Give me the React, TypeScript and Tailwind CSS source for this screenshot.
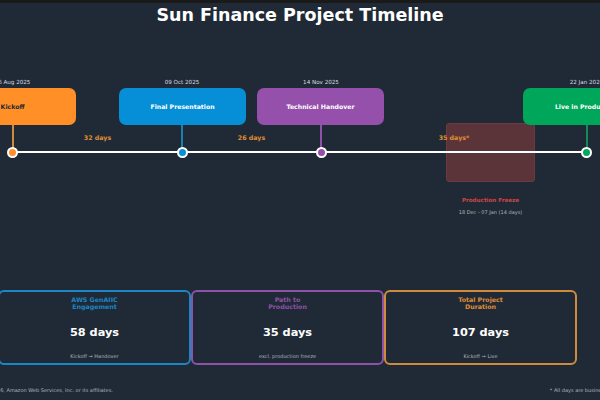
const font = { fontFamily: '"DejaVu Sans", sans-serif' };

const milestones = [
  { date: "06 Aug 2025", label: "Kickoff", x: 12.5, left: -51, box: "bg-[#ff8f26]", stem: "bg-[#d08a3c]", dot: "bg-[#ff8f26]", text: "text-[#1f2933]" },
  { date: "09 Oct 2025", label: "Final Presentation", x: 182, left: 119, box: "bg-[#068fd6]", stem: "bg-[#1a7fb5]", dot: "bg-[#068fd6]", text: "text-white" },
  { date: "14 Nov 2025", label: "Technical Handover", x: 321, left: 257, box: "bg-[#9450ab]", stem: "bg-[#8e52a6]", dot: "bg-[#9450ab]", text: "text-white" },
  { date: "22 Jan 2026", label: "Live in Production", x: 586.5, left: 523, box: "bg-[#00a65a]", stem: "bg-[#128a5a]", dot: "bg-[#00a65a]", text: "text-white" },
];

const gaps = [
  { label: "32 days", x: 97.5 },
  { label: "26 days", x: 251.5 },
  { label: "35 days*", x: 454 },
];

const cards = [
  { title: ["AWS GenAIIC", "Engagement"], value: "58 days", note: "Kickoff → Handover", border: "border-[#1a86c4]", color: "text-[#1a86c4]" },
  { title: ["Path to", "Production"], value: "35 days", note: "excl. production freeze", border: "border-[#8e52a6]", color: "text-[#8e52a6]" },
  { title: ["Total Project", "Duration"], value: "107 days", note: "Kickoff → Live", border: "border-[#d08a3c]", color: "text-[#e08e33]" },
];

export default function App() {
  return (
    <div className="w-[600px] h-[400px] overflow-hidden bg-[#1f2a36] flex flex-col relative" style={font}>
      <div className="h-[3px] bg-[#1a1a1a]" />
      <h1 className="text-center text-white font-bold text-[17.5px] leading-[24px]">Sun Finance Project Timeline</h1>

      {/* timeline canvas */}
      <div className="relative h-[236px]">
        {/* freeze block */}
        <div className="absolute left-[446px] top-[96px] w-[89px] h-[59px] rounded-[3px] bg-[#5a3439] border border-[#6b3a3e]" />

        <div className="absolute left-[13px] w-[574px] top-[124px] h-[2px] bg-white" />

        {milestones.map((m) => (
          <div key={m.label}>
            <div className={`absolute top-[97px] h-[28px] w-[2px] ${m.stem}`} style={{ left: m.x - 1 }} />
            <div className="absolute top-[51px] w-[80px] -ml-[40px] text-center text-[5.6px] leading-[9px] text-[#d8dce2]" style={{ left: m.x }}>
              {m.date}
            </div>
            <div
              className={`absolute top-[61px] w-[127px] h-[37px] rounded-[7px] flex items-center justify-center text-[6.2px] font-bold ${m.box} ${m.text}`}
              style={{ left: m.left }}
            >
              {m.label}
            </div>
            <div className={`absolute top-[119.5px] w-[11px] h-[11px] rounded-full border-2 border-white ${m.dot}`} style={{ left: m.x - 5.5 }} />
          </div>
        ))}

        {gaps.map((g) => (
          <div key={g.label} className="absolute top-[106px] w-[60px] -ml-[30px] text-center text-[6.3px] leading-[10px] font-bold text-[#e08e33]" style={{ left: g.x }}>
            {g.label}
          </div>
        ))}

        <div className="absolute left-[446px] top-[169px] w-[89px] text-center text-[5.6px] leading-[9px] font-bold text-[#d04545]">Production Freeze</div>
        <div className="absolute left-[440px] top-[181px] w-[101px] text-center text-[5px] leading-[9px] text-[#b0b6bf]">18 Dec - 07 Jan (14 days)</div>
      </div>

      {/* summary cards */}
      <div className="flex ml-[-2px] mt-[27px]">
        {cards.map((c) => (
          <div key={c.value} className={`w-[193px] h-[75px] shrink-0 rounded-[6px] border-2 ${c.border} flex flex-col items-center pt-[4px]`}>
            <div className={`text-[6.3px] leading-[7px] font-bold text-center ${c.color}`}>
              {c.title.map((t) => (
                <div key={t}>{t}</div>
              ))}
            </div>
            <div className="text-white font-bold text-[11.3px] leading-[14px] mt-[16px]">{c.value}</div>
            <div className="text-[5px] leading-[8px] text-[#b0b6bf] mt-[12px]">{c.note}</div>
          </div>
        ))}
      </div>

      <div className="flex justify-between mt-[21px] text-[5px] leading-[8px] text-[#b0b6bf] whitespace-nowrap">
        <div className="ml-[-16px]">© 2026, Amazon Web Services, Inc. or its affiliates.</div>
        <div className="mr-[-20px]">* All days are business days</div>
      </div>
    </div>
  );
}
